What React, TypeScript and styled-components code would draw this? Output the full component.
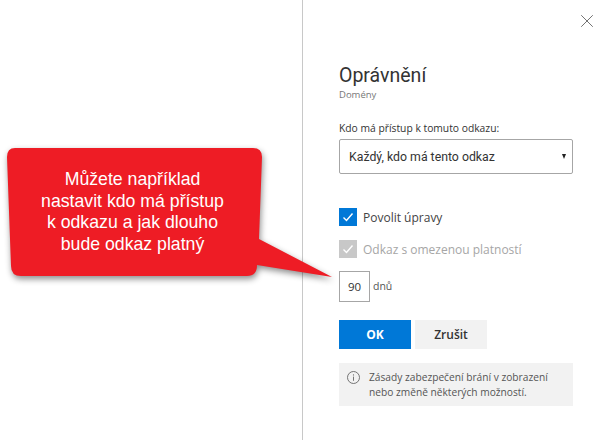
import React from "react";
import styled, { createGlobalStyle } from "styled-components";
import { X } from "lucide-react";

const GlobalStyle = createGlobalStyle`
  html, body {
    margin: 0;
    padding: 0;
    background: #fff;
    font-family: "Open Sans", "Noto Sans", sans-serif;
  }
`;

const Page = styled.div`
  position: relative;
  width: 607px;
  height: 440px;
  display: flex;
  overflow: hidden;
  background: #fff;
`;

const EmptyPane = styled.div`
  width: 302px;
  flex-shrink: 0;
  border-right: 1px solid #c8c8c8;
`;

const Panel = styled.section`
  position: relative;
  flex: 1;
  padding: 63px 0 0 36px;
  display: flex;
  flex-direction: column;
  width: 234px;
`;

const CloseButton = styled.div`
  position: absolute;
  top: 10px;
  left: 273px;
  color: #666;
  display: flex;
`;

const Title = styled.h1`
  margin: 0;
  font-family: Roboto, sans-serif;
  font-size: 19.5px;
  line-height: 26px;
  font-weight: 400;
  color: #333;
`;

const Subtitle = styled.div`
  margin-top: -1px;
  font-size: 9.5px;
  line-height: 14px;
  color: #777;
`;

const FieldLabel = styled.div`
  margin-top: 19px;
  font-size: 10.3px;
  line-height: 14px;
  color: #333;
`;

const Select = styled.div`
  margin-top: 4px;
  box-sizing: border-box;
  width: 234px;
  height: 35px;
  border: 1px solid #a6a6a6;
  border-radius: 2px;
  padding: 0 6px 0 9px;
  display: flex;
  align-items: center;
  justify-content: space-between;
  font-family: Roboto, sans-serif;
  font-size: 12.3px;
  color: #333;
`;

const Caret = styled.span`
  width: 0;
  height: 0;
  border-left: 2.5px solid transparent;
  border-right: 2.5px solid transparent;
  border-top: 5px solid #222;
`;

const CheckRow = styled.div<{ $first?: boolean }>`
  margin-top: ${(p) => (p.$first ? "34px" : "14px")};
  display: flex;
  align-items: center;
  gap: 6px;
`;

const CheckBox = styled.span<{ $disabled?: boolean }>`
  width: 18px;
  height: 18px;
  background: ${(p) => (p.$disabled ? "#c8c8c8" : "#0078d7")};
  display: flex;
  align-items: center;
  justify-content: center;
  color: #fff;
`;

const CheckLabel = styled.span<{ $disabled?: boolean }>`
  font-size: 12px;
  color: ${(p) => (p.$disabled ? "#a6a6a6" : "#444")};
`;

const DaysRow = styled.div`
  margin-top: 13px;
  display: flex;
  align-items: center;
  gap: 3px;
`;

const DaysInput = styled.div`
  box-sizing: border-box;
  width: 31px;
  height: 31px;
  border: 1px solid #a6a6a6;
  display: flex;
  align-items: center;
  justify-content: center;
  font-size: 11.5px;
  color: #333;
`;

const DaysLabel = styled.span`
  font-size: 10.5px;
  color: #555;
  margin-bottom: 2px;
`;

const Buttons = styled.div`
  margin-top: 18px;
  display: flex;
  gap: 4px;
`;

const Button = styled.div<{ $primary?: boolean }>`
  width: 72px;
  height: 29px;
  display: flex;
  align-items: center;
  justify-content: center;
  font-size: 12px;
  font-weight: ${(p) => (p.$primary ? 700 : 600)};
  background: ${(p) => (p.$primary ? "#0078d7" : "#f2f2f2")};
  color: ${(p) => (p.$primary ? "#fff" : "#333")};
`;

const InfoBox = styled.div`
  margin-top: 14px;
  box-sizing: border-box;
  width: 234px;
  height: 43px;
  background: #f2f2f2;
  padding: 7px 8px;
  display: flex;
  gap: 9px;
  font-size: 10.2px;
  line-height: 15px;
  color: #555;
  white-space: nowrap;
`;

const InfoIcon = styled.svg`
  flex-shrink: 0;
  margin-top: 1px;
`;

const Callout = styled.div`
  position: absolute;
  left: 0;
  top: 140px;
  width: 345px;
  height: 150px;
`;

const CalloutShape = styled.svg`
  position: absolute;
  inset: 0;
  filter: drop-shadow(1px 3px 3px rgba(0, 0, 0, 0.45));
`;

const CalloutText = styled.div`
  position: absolute;
  left: 0;
  top: 29px;
  width: 265px;
  text-align: center;
  font-family: "Liberation Sans", Arial, sans-serif;
  font-size: 17.7px;
  line-height: 21.6px;
  color: #fff;
`;

const App = () => {
  return (
    <Page>
      <GlobalStyle />
      <EmptyPane />
      <Panel>
        <CloseButton>
          <X size={22} strokeWidth={1} />
        </CloseButton>
        <Title>Oprávnění</Title>
        <Subtitle>Domény</Subtitle>
        <FieldLabel>Kdo má přístup k tomuto odkazu:</FieldLabel>
        <Select>
          Každý, kdo má tento odkaz
          <Caret />
        </Select>
        <CheckRow $first>
          <CheckBox>
            <svg width="12" height="12" viewBox="0 0 12 12" fill="none">
              <path d="M1.5 6.5L4.5 9.5L10.5 2.5" stroke="currentColor" strokeWidth="1.4" />
            </svg>
          </CheckBox>
          <CheckLabel>Povolit úpravy</CheckLabel>
        </CheckRow>
        <CheckRow>
          <CheckBox $disabled>
            <svg width="12" height="12" viewBox="0 0 12 12" fill="none">
              <path d="M1.5 6.5L4.5 9.5L10.5 2.5" stroke="currentColor" strokeWidth="1.4" />
            </svg>
          </CheckBox>
          <CheckLabel $disabled>Odkaz s omezenou platností</CheckLabel>
        </CheckRow>
        <DaysRow>
          <DaysInput>90</DaysInput>
          <DaysLabel>dnů</DaysLabel>
        </DaysRow>
        <Buttons>
          <Button $primary>OK</Button>
          <Button>Zrušit</Button>
        </Buttons>
        <InfoBox>
          <InfoIcon width="13" height="13" viewBox="0 0 13 13" fill="none">
            <circle cx="6.5" cy="6.5" r="6" stroke="#666" strokeWidth="0.9" />
            <path d="M6.5 5.6V9.8" stroke="#666" strokeWidth="0.9" />
            <circle cx="6.5" cy="3.9" r="0.6" fill="#666" />
          </InfoIcon>
          <span>
            Zásady zabezpečení brání v zobrazení
            <br />
            nebo změně některých možností.
          </span>
        </InfoBox>
      </Panel>
      <Callout>
        <CalloutShape width="345" height="150" viewBox="0 0 345 150">
          <path
            d="M15 8H253Q262 8 262 17L259 99L332 137L257 125Q257 136 247 136H21Q11 136 11 126L7 17Q7 8 15 8Z"
            fill="#ee1c25"
          />
        </CalloutShape>
        <CalloutText>
          Můžete například
          <br />
          nastavit kdo má přístup
          <br />k odkazu a jak dlouho
          <br />
          bude odkaz platný
        </CalloutText>
      </Callout>
    </Page>
  );
};

export default App;
